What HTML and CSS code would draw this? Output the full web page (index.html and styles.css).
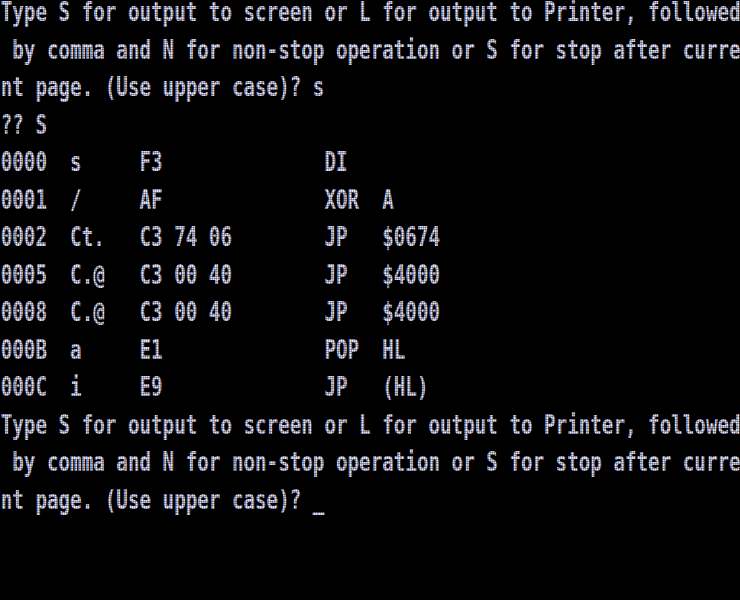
FILE: index.html
```html
<!DOCTYPE html>
<html>
<head>
<meta charset="utf-8">
<link rel="stylesheet" href="styles.css">
</head>
<body>
<div class="screen">
<div class="text">
<div class="line">Type S for output to screen or L for output to Printer, followed</div>
<div class="line"> by comma and N for non-stop operation or S for stop after curre</div>
<div class="line">nt page. (Use upper case)? s</div>
<div class="line">?? S</div>
<div class="line">0000  s     F3              DI</div>
<div class="line">0001  /     AF              XOR  A</div>
<div class="line">0002  Ct.   C3 74 06        JP   $0674</div>
<div class="line">0005  C.@   C3 00 40        JP   $4000</div>
<div class="line">0008  C.@   C3 00 40        JP   $4000</div>
<div class="line">000B  a     E1              POP  HL</div>
<div class="line">000C  i     E9              JP   (HL)</div>
<div class="line">Type S for output to screen or L for output to Printer, followed</div>
<div class="line"> by comma and N for non-stop operation or S for stop after curre</div>
<div class="line">nt page. (Use upper case)? _</div>
</div>
</div>
</body>
</html>
```
FILE: styles.css
```css
html, body {
  margin: 0;
  padding: 0;
  background: #000;
  overflow: hidden;
}
.screen {
  position: relative;
  width: 740px;
  height: 600px;
  background: #000;
  overflow: hidden;
}
.text {
  width: 1002px;
  transform: scaleX(0.7385);
  transform-origin: 0 0;
  margin-top: -6px;
  font-family: "DejaVu Sans Mono", monospace;
  font-weight: bold;
  font-size: 26px;
  line-height: 37.5px;
  color: #e0e0ff;
}
.line {
  white-space: pre;
  height: 37.5px;
  padding-left: 1px;
}
.screen::after {
  content: "";
  position: absolute;
  inset: 0;
  background:
    repeating-linear-gradient(0deg, rgba(0,0,0,0.3) 0 1px, transparent 1px 2.34px),
    repeating-linear-gradient(90deg, rgba(0,0,0,0.25) 0 1px, transparent 1px 1.93px);
  pointer-events: none;
}
```
